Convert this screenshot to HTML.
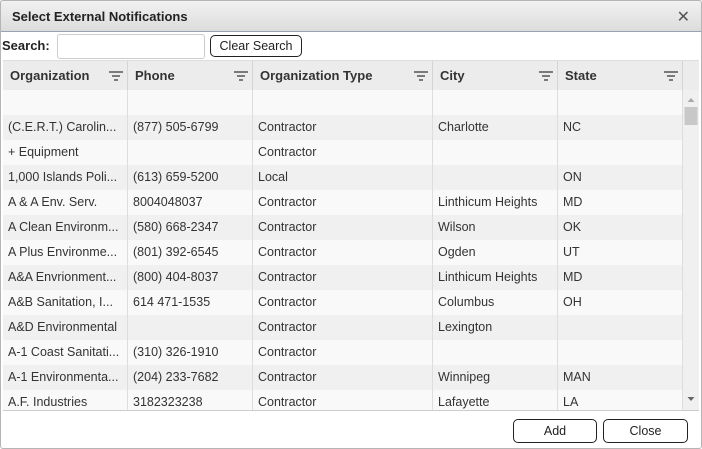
<!DOCTYPE html>
<html><head><style>
*{box-sizing:border-box;margin:0;padding:0}
body{width:702px;height:449px;background:#fff;font-family:"Liberation Sans","DejaVu Sans",sans-serif;font-size:12.5px;color:#333;position:relative;overflow:hidden}
.bd{position:absolute;left:0;top:0;width:702px;height:449px;border:1px solid #b5b5b5;border-radius:3px;z-index:5;pointer-events:none}
.title{position:absolute;left:0;top:0;width:702px;height:32px;background:linear-gradient(#f2f2f2,#dcdcdc);border-bottom:1px solid #9aa3b3;font-weight:bold;font-size:13px;color:#222;padding:9px 0 0 12px}
.x{position:absolute;right:12px;top:7px;font-size:16px;color:#555;font-weight:normal}
.srch{position:absolute;left:2px;top:38px;font-weight:bold;font-size:13px;color:#222}
.inp{position:absolute;left:57px;top:34px;width:148px;height:25px;border:1px solid #ccc;border-radius:3px}
.btn{position:absolute;border:1px solid #222;border-radius:5px;background:#fff;text-align:center;color:#222;font-size:12.5px}
.hdr{position:absolute;left:3px;top:60px;width:696px;height:31px;background:#ececec;border-top:1px solid #ddd;border-bottom:1px solid #bbb}
.hc{position:absolute;top:0;height:30px;border-right:1px solid #d5d5d5;font-weight:bold;color:#333;padding:7px 0 0 7px;font-size:13px}
.hc svg{position:absolute;right:4px;top:10px}
.rows{position:absolute;left:3px;top:90px;width:680px;height:321px;overflow:hidden;border-bottom:1px solid #ccc}
.r{height:25px;position:relative}
.r:nth-child(odd){background:#f9f9f9}.r:nth-child(even){background:#f0f0f0}
.c{position:absolute;top:0;height:25px;border-right:1px solid #ddd;padding:5px 0 0 5px;white-space:nowrap;overflow:hidden;color:#333}
.sb{position:absolute;left:683px;top:90px;width:16px;height:321px;background:#f0f0f0;border-bottom:1px solid #ccc}
</style></head><body><div class="bd"></div>
<div class="title">Select External Notifications<span class="x">✕</span></div>
<div class="srch">Search:</div><div class="inp"></div>
<div class="btn" style="left:210px;top:35px;width:92px;height:22px;padding-top:3px">Clear Search</div>
<div class="hdr">
<div class="hc" style="left:0;width:125px">Organization<svg width="14" height="10"><path d="M0 1h14M3 5h8M5 9h4" stroke="#555" stroke-width="1.4"/></svg></div>
<div class="hc" style="left:125px;width:125px">Phone<svg width="14" height="10"><path d="M0 1h14M3 5h8M5 9h4" stroke="#555" stroke-width="1.4"/></svg></div>
<div class="hc" style="left:250px;width:180px">Organization Type<svg width="14" height="10"><path d="M0 1h14M3 5h8M5 9h4" stroke="#555" stroke-width="1.4"/></svg></div>
<div class="hc" style="left:430px;width:125px">City<svg width="14" height="10"><path d="M0 1h14M3 5h8M5 9h4" stroke="#555" stroke-width="1.4"/></svg></div>
<div class="hc" style="left:555px;width:125px">State<svg width="14" height="10"><path d="M0 1h14M3 5h8M5 9h4" stroke="#555" stroke-width="1.4"/></svg></div>
</div>
<div class="rows">
<div class="r"><div class="c" style="left:0;width:125px"></div><div class="c" style="left:125px;width:125px"></div><div class="c" style="left:250px;width:180px"></div><div class="c" style="left:430px;width:125px"></div><div class="c" style="left:555px;width:125px"></div></div>
<div class="r"><div class="c" style="left:0;width:125px">(C.E.R.T.) Carolin...</div><div class="c" style="left:125px;width:125px">(877) 505-6799</div><div class="c" style="left:250px;width:180px">Contractor</div><div class="c" style="left:430px;width:125px">Charlotte</div><div class="c" style="left:555px;width:125px">NC</div></div>
<div class="r"><div class="c" style="left:0;width:125px">+ Equipment</div><div class="c" style="left:125px;width:125px"></div><div class="c" style="left:250px;width:180px">Contractor</div><div class="c" style="left:430px;width:125px"></div><div class="c" style="left:555px;width:125px"></div></div>
<div class="r"><div class="c" style="left:0;width:125px">1,000 Islands Poli...</div><div class="c" style="left:125px;width:125px">(613) 659-5200</div><div class="c" style="left:250px;width:180px">Local</div><div class="c" style="left:430px;width:125px"></div><div class="c" style="left:555px;width:125px">ON</div></div>
<div class="r"><div class="c" style="left:0;width:125px">A &amp; A Env. Serv.</div><div class="c" style="left:125px;width:125px">8004048037</div><div class="c" style="left:250px;width:180px">Contractor</div><div class="c" style="left:430px;width:125px">Linthicum Heights</div><div class="c" style="left:555px;width:125px">MD</div></div>
<div class="r"><div class="c" style="left:0;width:125px">A Clean Environm...</div><div class="c" style="left:125px;width:125px">(580) 668-2347</div><div class="c" style="left:250px;width:180px">Contractor</div><div class="c" style="left:430px;width:125px">Wilson</div><div class="c" style="left:555px;width:125px">OK</div></div>
<div class="r"><div class="c" style="left:0;width:125px">A Plus Environme...</div><div class="c" style="left:125px;width:125px">(801) 392-6545</div><div class="c" style="left:250px;width:180px">Contractor</div><div class="c" style="left:430px;width:125px">Ogden</div><div class="c" style="left:555px;width:125px">UT</div></div>
<div class="r"><div class="c" style="left:0;width:125px">A&amp;A Envrionment...</div><div class="c" style="left:125px;width:125px">(800) 404-8037</div><div class="c" style="left:250px;width:180px">Contractor</div><div class="c" style="left:430px;width:125px">Linthicum Heights</div><div class="c" style="left:555px;width:125px">MD</div></div>
<div class="r"><div class="c" style="left:0;width:125px">A&amp;B Sanitation, I...</div><div class="c" style="left:125px;width:125px">614 471-1535</div><div class="c" style="left:250px;width:180px">Contractor</div><div class="c" style="left:430px;width:125px">Columbus</div><div class="c" style="left:555px;width:125px">OH</div></div>
<div class="r"><div class="c" style="left:0;width:125px">A&amp;D Environmental</div><div class="c" style="left:125px;width:125px"></div><div class="c" style="left:250px;width:180px">Contractor</div><div class="c" style="left:430px;width:125px">Lexington</div><div class="c" style="left:555px;width:125px"></div></div>
<div class="r"><div class="c" style="left:0;width:125px">A-1 Coast Sanitati...</div><div class="c" style="left:125px;width:125px">(310) 326-1910</div><div class="c" style="left:250px;width:180px">Contractor</div><div class="c" style="left:430px;width:125px"></div><div class="c" style="left:555px;width:125px"></div></div>
<div class="r"><div class="c" style="left:0;width:125px">A-1 Environmenta...</div><div class="c" style="left:125px;width:125px">(204) 233-7682</div><div class="c" style="left:250px;width:180px">Contractor</div><div class="c" style="left:430px;width:125px">Winnipeg</div><div class="c" style="left:555px;width:125px">MAN</div></div>
<div class="r"><div class="c" style="left:0;width:125px">A.F. Industries</div><div class="c" style="left:125px;width:125px">3182323238</div><div class="c" style="left:250px;width:180px">Contractor</div><div class="c" style="left:430px;width:125px">Lafayette</div><div class="c" style="left:555px;width:125px">LA</div></div>
</div>
<div class="sb"><svg width="16" height="320" style="position:absolute;left:0;top:0"><path d="M4.5 12l3.5-4 3.5 4z" fill="#aaa"/><rect x="1.5" y="17" width="13" height="18" fill="#c8c8c8"/><path d="M4.5 307l3.5 4 3.5-4z" fill="#666"/></svg></div>
<div class="btn" style="left:513px;top:419px;width:84px;height:24px;padding-top:4px">Add</div>
<div class="btn" style="left:603px;top:419px;width:85px;height:24px;padding-top:4px">Close</div>
</body></html>
